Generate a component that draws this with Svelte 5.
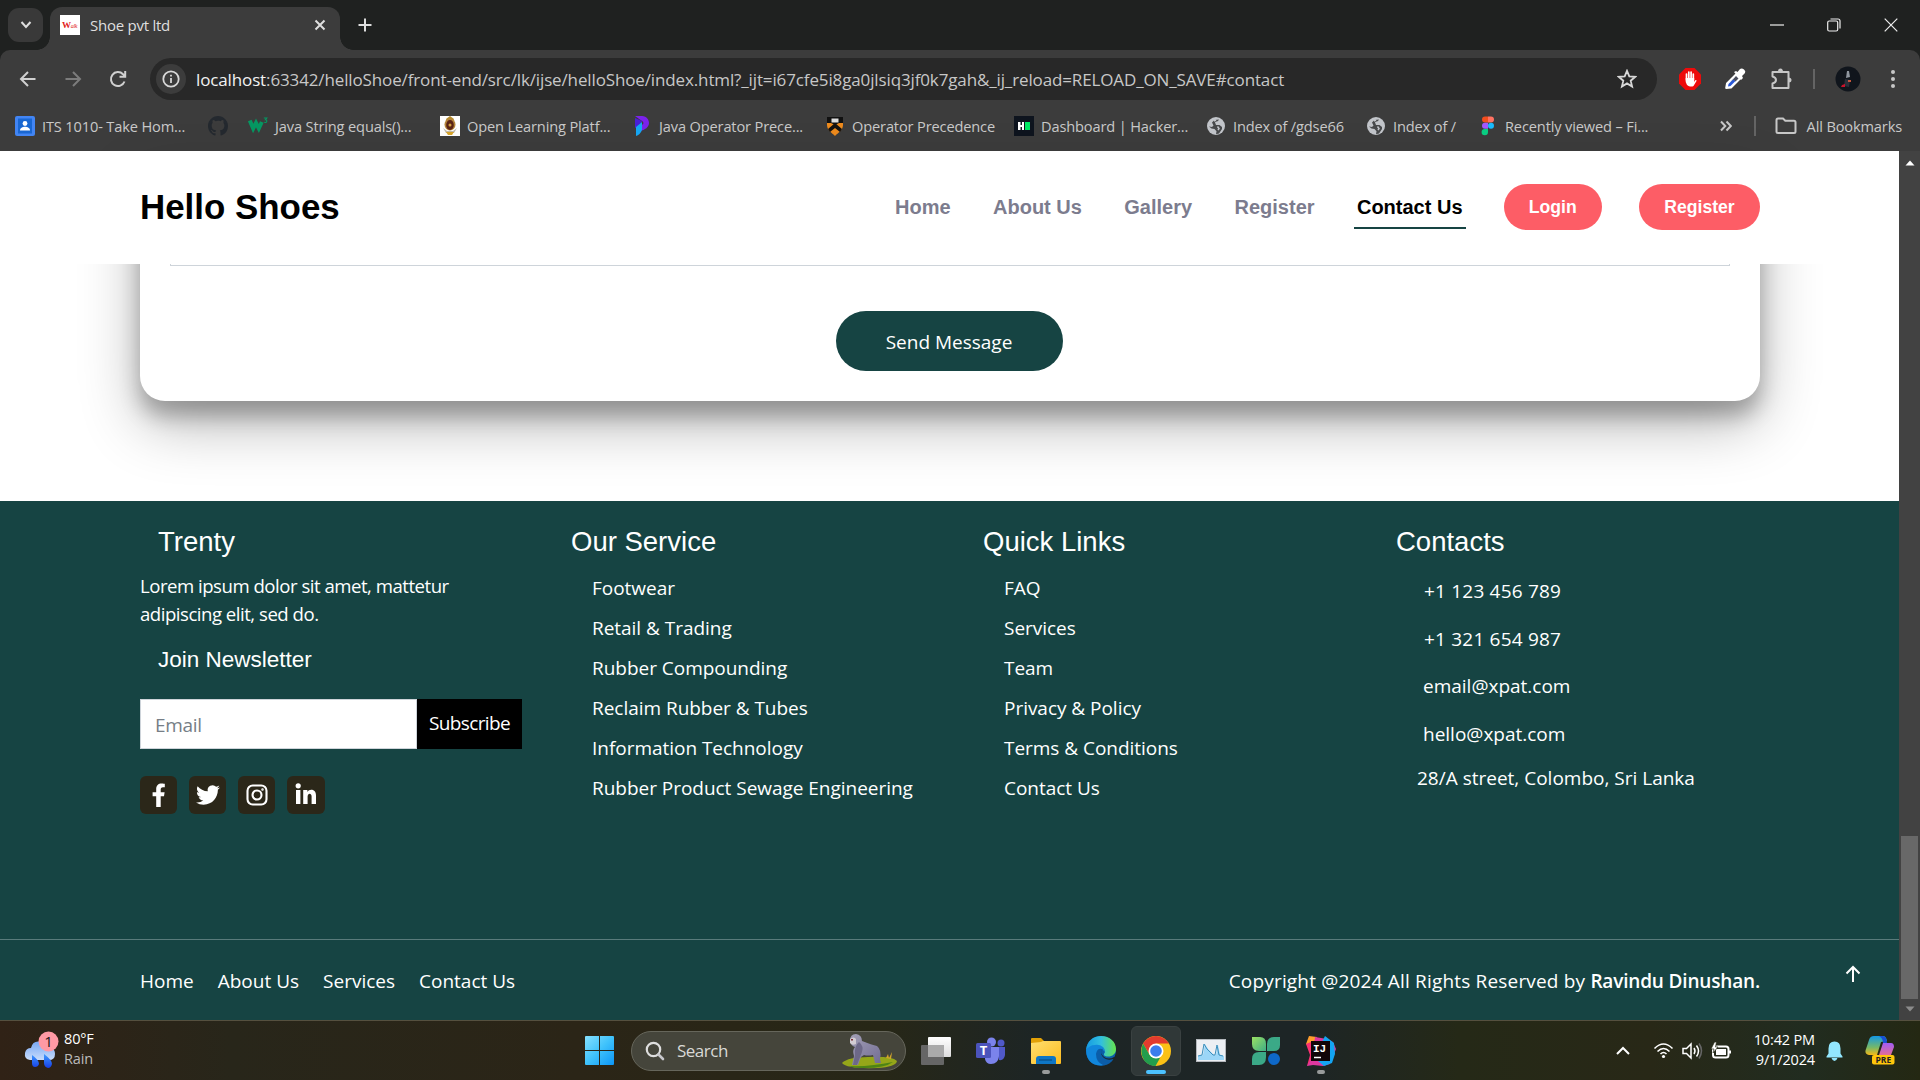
<script>
  const bookmarks = [
    { icon: 'contact', label: 'ITS 1010- Take Hom...' },
    { icon: 'github', label: '' },
    { icon: 'w3', label: 'Java String equals()...' },
    { icon: 'crest', label: 'Open Learning Platf...' },
    { icon: 'programiz', label: 'Java Operator Prece...' },
    { icon: 'princeton', label: 'Operator Precedence' },
    { icon: 'hacker', label: 'Dashboard | Hacker...' },
    { icon: 'globe', label: 'Index of /gdse66' },
    { icon: 'globe', label: 'Index of /' },
    { icon: 'figma', label: 'Recently viewed – Fi...' }
  ];
  const nav = ['Home', 'About Us', 'Gallery', 'Register', 'Contact Us'];
  const services = ['Footwear', 'Retail & Trading', 'Rubber Compounding', 'Reclaim Rubber & Tubes', 'Information Technology', 'Rubber Product Sewage Engineering'];
  const links = ['FAQ', 'Services', 'Team', 'Privacy & Policy', 'Terms & Conditions', 'Contact Us'];
</script>

{#snippet bookmarkIcon(name)}
  <svg class="bm-icon" viewBox="0 0 20 20" width="20" height="20">
    {#if name === 'contact'}
      <rect width="20" height="20" rx="2" fill="#4285f4" /><rect x="3" y="2.500" width="14" height="15" fill="#1967d2" />
      <circle cx="10" cy="7.500" r="2.400" fill="#fff" /><path d="M5 14.500c0-5 10-5 10 0z" fill="#fff" />
    {:else if name === 'github'}
      <path transform="scale(1.25)" fill="#24292f" d="M8 0C3.580 0 0 3.580 0 8c0 3.540 2.290 6.530 5.470 7.590.4.070.550-.170.550-.380v-1.490c-2.010.370-2.530-.490-2.690-.940-.090-.230-.480-.940-.820-1.130-.280-.150-.680-.520-.010-.530.630-.010 1.080.580 1.230.820.720 1.210 1.870.870 2.330.660.070-.520.280-.870.510-1.070-1.780-.2-3.640-.890-3.640-3.950 0-.870.310-1.590.820-2.150-.080-.2-.360-1.020.080-2.120 0 0 .670-.210 2.200.820A7.600 7.600 0 0 1 8 3.860c.680 0 1.360.090 2 .270 1.530-1.040 2.200-.820 2.200-.820.440 1.100.160 1.920.080 2.120.510.560.820 1.270.820 2.150 0 3.070-1.870 3.750-3.650 3.950.290.250.540.730.540 1.480v2.200c0 .210.150.460.550.380A8 8 0 0 0 16 8c0-4.420-3.580-8-8-8z" />
    {:else if name === 'w3'}
      <path d="M1.800 4.500l3.400 8 2.800-5.500 2.800 5.500 3-6.500" fill="none" stroke="#059862" stroke-width="4" stroke-linejoin="miter" stroke-miterlimit="3" />
      <path d="M15.800 2h3l-1.400 1.700c2 0 1.800 3-.2 2.800l-1-.3" fill="none" stroke="#059862" stroke-width="1.100" />
    {:else if name === 'crest'}
      <rect width="20" height="20" fill="#fff" /><path d="M6 3l4-3 4 3-1 3H7z" fill="#b58b2c" /><ellipse cx="10" cy="8.500" rx="5.500" ry="6" fill="#b5853a" />
      <ellipse cx="10" cy="9" rx="3.800" ry="5" fill="#5b2416" /><circle cx="10" cy="9" r="1.500" fill="#d3a240" /><path d="M3 12l4 3h6l4-3-3 5H6z" fill="#c4bcae" /><path d="M6 16h8l-2 3H8z" fill="#d8a62c" />
    {:else if name === 'programiz'}
      <path d="M3 0h7c5 0 7 4 7 7 0 4-4 7-9 8l1-6c3 0 3-3 1-4z" fill="#7c22ec" /><path d="M3 2l7 3-2 4-5 3z" fill="#4a20d5" /><path d="M10 6v8q-2 5-6 6v-9z" fill="#16a8f5" />
    {:else if name === 'princeton'}
      <path d="M2 2h16v7c0 5-5 8-8 11C7 17 2 14 2 9z" fill="#ee8b1d" /><path d="M2 1h16v6h-4l-4 2-4-2H2z" fill="#111" /><rect x="6.500" y="2.500" width="7" height="4" fill="#ddd" /><path d="M3 13l7-6 7 6-2 3-5-4-5 4z" fill="#15120f" />
    {:else if name === 'hacker'}
      <rect width="20" height="20" fill="#0e141e" /><path d="M4 6h2.500v3H8V6h2v8H8v-3H6.500v3H4z" fill="#fff" /><rect x="11" y="6" width="5" height="8" fill="#00ea64" />
    {:else if name === 'globe'}
      <circle cx="10" cy="10" r="9" fill="#c2c5ca" /><path d="M13 3.500c-1 2.500-3 1.500-4 3l1 2.500h3.500l2.500 2v2l-3 4.500-3 .8.500-3-2-2.300-3-.5L3 10.500l3 .5 1.500-1.500L6 6.500 8.500 4z" fill="#484a4c" /><path d="M11.500 10.500l1.500 2-1 1.500M8 5l2-1" stroke="#c2c5ca" stroke-width="1.500" fill="none" />
    {:else}
      <path d="M7 0.500h3v6H7a3 3 0 0 1 0-6z" fill="#f24e1e" /><path d="M10 .5h3a3 3 0 0 1 0 6h-3z" fill="#ff7262" /><path d="M10 6.700H7a3 3 0 0 0 0 6h3z" fill="#a259ff" />
      <circle cx="13" cy="9.700" r="3" fill="#1abcfe" /><path d="M10 12.900H7a3.200 3.200 0 1 0 3 3.200z" fill="#0acf83" />
    {/if}
  </svg>
{/snippet}

<div class="screen">
  <header class="tabstrip">
    <button class="tab-search" aria-label="Search tabs"><svg width="14" height="10" viewBox="0 0 14 10"><path d="M2.500 2l4.500 5 4.500-5" /></svg></button>
    <div class="tab">
      <span class="favicon"><b>W</b><i>alk</i></span>
      <span class="tab-title">Shoe pvt ltd</span>
      <svg width="14" height="14" viewBox="0 0 14 14"><path d="M2.500 2.500l9 9m0-9l-9 9" /></svg>
    </div>
    <svg class="plus" width="16" height="16" viewBox="0 0 16 16"><path d="M8 1.500v13M1.500 8h13" /></svg>
    <div class="window-controls">
      <svg width="14" height="14" viewBox="0 0 14 14"><path d="M0 7h14" /></svg>
      <svg width="14" height="14" viewBox="0 0 14 14"><rect x=".7" y="3" width="10" height="10" rx="1.500" /><path d="M3.500 1h7.500q2 0 2 2v7.500" /></svg>
      <svg width="14" height="14" viewBox="0 0 14 14"><path d="M.7.700l12.600 12.600m0-12.600L.7 13.300" /></svg>
    </div>
  </header>

  <section class="chrome">
    <div class="toolbar">
      <div class="nav-icons">
        <svg width="20" height="20" viewBox="0 0 20 20"><path d="M17.500 10H3m7-7l-7 7 7 7" /></svg>
        <svg class="dim" width="20" height="20" viewBox="0 0 20 20"><path d="M2.500 10H17m-7-7l7 7-7 7" /></svg>
        <svg width="20" height="20" viewBox="0 0 20 20"><path d="M16.500 12.500a7 7 0 1 1-1.500-7.300L17 7.500M17.200 2v5.700h-5.700" /></svg>
      </div>
      <div class="omnibox">
        <span class="info"><svg width="20" height="20" viewBox="0 0 20 20"><circle cx="10" cy="10" r="7.700" /><path d="M10 9v5M10 5.700v1.900" /></svg></span>
        <span class="url"><b>localhost</b>:63342/helloShoe/front-end/src/lk/ijse/helloShoe/index.html?_ijt=i67cfe5i8ga0jlsiq3jf0k7gah&_ij_reload=RELOAD_ON_SAVE#contact</span>
        <svg class="star" width="20" height="20" viewBox="0 0 20 20"><path d="M10 1.800l2.300 5.500 6 .5-4.600 3.900 1.400 5.900-5.100-3.200-5.100 3.200 1.400-5.900-4.600-3.900 6-.5z" /></svg>
      </div>
      <div class="extensions">
        <svg width="22" height="22" viewBox="0 0 22 22"><path d="M6.500 0h9L22 6.500v9L15.500 22h-9L0 15.500v-9z" fill="#ed0b0b" /><path d="M7.500 12V6m2.300 5V4m2.300 7V4m2.200 8V6" stroke="#fff" stroke-width="1.700" stroke-linecap="round" /><path d="M6.700 10h8.500v4l1.300-2q1.500 0 1 1l-3 5q-2 1-5 0-2-1-2.800-4z" fill="#fff" /></svg>
        <svg width="22" height="22" viewBox="0 0 22 22"><path d="M2.200 20l.8-4.500 9.500-9.500 4 4L7 19.500z" fill="#fff" stroke="#fff" stroke-width="2" stroke-linejoin="round" /><path d="M4 18.500l.5-2.500 5-5 2 2-5 5z" fill="#2857d8" /><path d="M6.500 14L12 8l2.500 2.500-3 3-2-2z" fill="#4b4f5e" /><path d="M10 4l2-1 1.500 1L16 1q2-1 4 .5T21 5l-3 3 1 2-2 2z" fill="#fff" /></svg>
        <svg class="outline" width="24" height="24" viewBox="0 0 24 24"><path d="M3.500 5h16v16h-16v-4.500q3.500-1 3.500-3.500t-3.500-3.500z" stroke-linejoin="round" /><path d="M9 5q0-3.500 2.500-3.500T14 5zM19.500 10.500q3 0 3 2.500t-3 2.500z" fill="#c7c7c7" stroke="none" /></svg>
        <span class="divider"></span>
        <svg class="avatar" width="26" height="26" viewBox="0 0 26 26"><circle cx="13" cy="13" r="12.500" fill="#10151c" /><path d="M12 5l2 0 1 6-4 1z" fill="#8f969f" /><path d="M10 13l5 1-1 7-5-1z" fill="#2b303b" /><path d="M13 14h3v2h-3z" fill="#c9573c" /><path d="M7 19l3-1v3H6z" fill="#c8122b" /></svg>
        <svg class="dots" width="6" height="20" viewBox="0 0 6 20"><g fill="#c7c7c7"><circle cx="3" cy="3" r="2" /><circle cx="3" cy="10" r="2" /><circle cx="3" cy="17" r="2" /></g></svg>
      </div>
    </div>
    <div class="bookmarks">
      <div class="bookmark-grid">
        {#each bookmarks as bookmark}
          <span class="bookmark">{@render bookmarkIcon(bookmark.icon)}{bookmark.label}</span>
        {/each}
      </div>
      <div class="all-bookmarks">
        <svg class="more" width="12" height="12" viewBox="0 0 12 12"><path d="M1 1.500L5.300 6 1 10.500M6.500 1.500L10.800 6l-4.300 4.500" /></svg>
        <span class="divider"></span>
        <svg class="folder" width="22" height="18" viewBox="0 0 22 18"><path d="M1.500 3q0-1.500 1.500-1.500h5l2.300 2.300H19q1.500 0 1.500 1.500V14.500q0 1.500-1.500 1.500H3q-1.500 0-1.500-1.500z" /></svg>
        <span>All Bookmarks</span>
      </div>
    </div>
  </section>

  <div class="viewport">
    <main class="page">
      <nav class="site-nav">
        <h1>Hello Shoes</h1>
        <div class="nav-links">
          {#each nav as item, i}<a class:active={i === 4} href="#{item}">{item}</a>{/each}
        </div>
        <div class="nav-buttons"><button>Login</button><button>Register</button></div>
      </nav>
      <section class="contact">
        <div class="card">
          <div class="message-box"></div>
          <button class="send">Send Message</button>
        </div>
      </section>
      <footer>
        <div class="columns">
          <div class="about">
            <h2>Trenty</h2>
            <p>Lorem ipsum dolor sit amet, mattetur<br />adipiscing elit, sed do.</p>
            <h3>Join Newsletter</h3>
            <div class="newsletter"><span class="email">Email</span><button>Subscribe</button></div>
            <div class="social">
              <span><svg width="24" height="24" viewBox="0 0 24 24"><path fill="#fff" d="M9.200 24V13.300H5.600V9.200h3.600V6.100C9.200 2.500 11.300.5 14.600.5c1.600 0 3.200.3 3.200.3v3.500H16c-1.800 0-2.300 1.100-2.300 2.200v2.700h3.900l-.6 4.100h-3.300V24z" /></svg></span>
              <span><svg width="24" height="24" viewBox="0 0 24 24"><path fill="#fff" d="M23.950 4.570a10 10 0 0 1-2.820.770 4.960 4.960 0 0 0 2.160-2.720c-.950.550-2 .950-3.130 1.180a4.920 4.920 0 0 0-8.380 4.480C7.690 8.100 4.070 6.130 1.640 3.160a4.820 4.820 0 0 0-.660 2.480c0 1.710.870 3.210 2.190 4.100a4.900 4.900 0 0 1-2.230-.620v.060a4.920 4.920 0 0 0 3.950 4.830 5 5 0 0 1-2.210.080 4.940 4.940 0 0 0 4.600 3.420A9.870 9.870 0 0 1 0 19.540a13.990 13.990 0 0 0 7.550 2.210c9.140 0 14.310-7.720 14.310-14.420l-.020-.640a9.940 9.940 0 0 0 2.110-2.120z" /></svg></span>
              <span><svg width="24" height="24" viewBox="0 0 24 24" fill="none" stroke="#fff" stroke-width="2.100"><rect x="2.500" y="2.500" width="19" height="19" rx="5.200" /><circle cx="12" cy="12" r="4.500" /><circle cx="17.500" cy="6.500" r=".5" stroke-width="1.500" /></svg></span>
              <span><svg width="24" height="24" viewBox="0 0 24 24" fill="#fff"><circle cx="4.200" cy="2.800" r="2.600" /><path d="M2 7h4.400v14H2zM9.200 7h4.200v1.900c1.700-3.200 8.600-3.200 8.600 3.600V21h-4.400v-7.500c0-4-4-3.600-4 0V21H9.200z" /></svg></span>
            </div>
          </div>
          <div class="links-col"><h2>Our Service</h2><ul>{#each services as item}<li>{item}</li>{/each}</ul></div>
          <div class="links-col"><h2>Quick Links</h2><ul>{#each links as item}<li>{item}</li>{/each}</ul></div>
          <div class="contacts"><h2>Contacts</h2><p class="phone">+1 123 456 789</p><p class="phone">+1 321 654 987</p><p>email@xpat.com</p><p>hello@xpat.com</p><p class="address">28/A street, Colombo, Sri Lanka</p></div>
        </div>
        <div class="bottom">
          <div class="bottom-links"><span>Home</span><span>About Us</span><span>Services</span><span>Contact Us</span></div>
          <p class="copyright">Copyright @2024 All Rights Reserved by <b>Ravindu Dinushan.</b></p>
          <svg class="to-top" width="16" height="18" viewBox="0 0 16 18"><path d="M8 17V2M1.500 8.500L8 2l6.500 6.500" /></svg>
        </div>
      </footer>
    </main>
    <aside class="scrollbar">
      <svg width="10" height="8" viewBox="0 0 10 8"><path d="M5 1.500L9.500 6.500h-9z" fill="#fff" /></svg>
      <span class="thumb"></span>
      <svg width="10" height="8" viewBox="0 0 10 8"><path d="M5 6.500L9.500 1.500h-9z" fill="#8c8c8c" /></svg>
    </aside>
  </div>

  <div class="taskbar">
    <div class="weather">
      <svg width="36" height="40" viewBox="0 0 36 40">
        <defs><linearGradient id="cloud" x2="0" y2="1"><stop stop-color="#78a8f5" /><stop offset="1" stop-color="#c8dcfb" /></linearGradient><linearGradient id="drop" x2="0" y2="1"><stop stop-color="#3f9cff" /><stop offset="1" stop-color="#173fe8" /></linearGradient></defs>
        <path d="M6 29q-6-1-5-7 1-5 6-5Q9 9 17 11q10-2 10 6 4 1 4 6 0 6-6 6z" fill="url(#cloud)" />
        <path d="M8 24q7 5 7 9-1 3-4 3-3 0-3-4zM20 23q8 6 8 10-1 4-4 4-4-1-4-5z" fill="url(#drop)" />
        <circle cx="24.500" cy="10.500" r="10" fill="#ff99a4" /><text x="24.500" y="16" text-anchor="middle" font-size="15" fill="#201516">1</text>
      </svg>
      <div class="weather-text"><span>80°F</span><span class="muted">Rain</span></div>
    </div>

    <div class="apps">
      <svg width="29" height="29" viewBox="0 0 29 29"><defs><linearGradient id="win" x2="1" y2="1"><stop stop-color="#86e1ff" /><stop offset=".5" stop-color="#3fc2fb" /><stop offset="1" stop-color="#0c96f8" /></linearGradient></defs><path fill="url(#win)" d="M1 0h13v14H0V1q0-1 1-1zM15 0h13q1 0 1 1v13H15zM0 15h14v14H1q-1 0-1-1zM15 15h14v13q0 1-1 1H15z" /></svg>
      <div class="search">
        <svg width="20" height="20" viewBox="0 0 20 20"><circle cx="8.500" cy="8.500" r="6.700" fill="none" stroke="#dedede" stroke-width="2.200" /><path d="M13.500 13.500l4.500 4.500" stroke="#c8c8cc" stroke-width="2.600" stroke-linecap="round" /></svg>
        <span>Search</span>
        <svg class="gorilla" width="57" height="36" viewBox="0 0 57 36">
          <defs><linearGradient id="fur" x2="1" y2="1"><stop stop-color="#a39fb6" /><stop offset="1" stop-color="#716c93" /></linearGradient></defs>
          <path d="M1 30q6-6 26-6 24-1 29 4-1 6-20 7-30 1-35-5z" fill="#95a619" /><path d="M8 33q20 1 44-4-8 6-28 6-12 0-16-2z" fill="#4e8415" /><path d="M45 25l2-4 1 4 3-6-1 7" fill="#d4a62a" />
          <path d="M9 8q0-7 6-7 6 1 6 7 10 4 15 5 5 4 3 13l1 4h-6l-2-8q-5 1-9 0l-3 2-3 8h-6l2-9q-2-6 1-9-4-1-5-6z" fill="url(#fur)" /><path d="M18 9q5 4 3 10l-5 13h-4l2-10q-1-9 4-13z" fill="#6d6888" /><path d="M9 6q4-3 6 0v5q-4 2-6-1z" fill="#d3ccd3" /><path d="M10 6h2v1.500h-2z" fill="#7a3038" />
        </svg>
      </div>
      <svg width="30" height="28" viewBox="0 0 30 28"><defs><linearGradient id="view" x2="0" y2="1"><stop stop-color="#fff" /><stop offset="1" stop-color="#ddd" /></linearGradient></defs><rect y="8" width="23" height="20" rx="1" fill="#666" /><rect x="7" width="23" height="20" rx="1" fill="url(#view)" /><rect x="7" y="8" width="16" height="12" fill="#aaa" /></svg>
      <svg width="30" height="28" viewBox="0 0 30 28"><circle cx="15.500" cy="5" r="4.500" fill="#7b83eb" /><circle cx="25" cy="6" r="3.500" fill="#5059c9" /><path d="M20 10h9v8q-1 6-6 5z" fill="#5059c9" /><path d="M9 10h14v9q-1 8-8 8-5 0-6-5z" fill="#7b83eb" /><rect y="6" width="15" height="15" rx="1.500" fill="#4b53bc" /><text x="7.500" y="18" text-anchor="middle" fill="#fff" font-size="13" font-weight="700">T</text></svg>
      <svg width="30" height="28" viewBox="0 0 30 28"><defs><linearGradient id="fold" x2="1" y2="1"><stop stop-color="#ffdf70" /><stop offset="1" stop-color="#fdbc1f" /></linearGradient></defs><path d="M0 2q0-1 1-1h9l3 3-3 6H0z" fill="#e2a107" /><path d="M10 5l2-1h17q1 0 1 1v21q0 1-1 1H1q-1 0-1-1V6z" fill="url(#fold)" /><path d="M5 27v-5q0-3 3-3h14q3 0 3 3v5z" fill="#0e76c5" /><path d="M8 23h13" stroke="#074579" /></svg>
      <svg width="30" height="30" viewBox="0 0 30 30"><defs><linearGradient id="edge" x1="0" x2="1"><stop stop-color="#159ae3" /><stop offset=".5" stop-color="#32bfdf" /><stop offset="1" stop-color="#66e44c" /></linearGradient></defs><circle cx="15" cy="15" r="15" fill="#0b5da8" /><path d="M0 14q3-7 11-6 8 1 8 8l-3-3q-5-1-6 5 0 8 7 11Q1 31 0 14z" fill="#1187dc" /><path d="M0 14C1 5 7 0 15 0c9 0 15 6 15 13 0 6-6 9-11 7-2-1-1-2 0-4 0-5-5-8-10-7-4 0-7 2-9 5z" fill="url(#edge)" /><path d="M17 12q-4 5 1 9 5 3 10 0 2-1 1-1l1-3v3l-3 5 0 0q1-2 0-2-5 2-9-1-5-4-1-10z" fill="#1c2426" /></svg>
      <span class="app-active"><svg width="30" height="30" viewBox="0 0 30 30"><circle cx="15" cy="15" r="15" fill="#fbc116" /><path d="M2 7.500Q7 0 15 0t13 7.500H15l-6.500 11z" fill="#e33b2e" /><path d="M2 7.500l6.500 11.200Q11 22 15 22h4l-4.500 8Q8 30 3.500 25-2 17 2 7.500z" fill="#229d4d" /><circle cx="15" cy="15" r="7.500" fill="#fff" /><circle cx="15" cy="15" r="5.800" fill="#3b7ded" /></svg></span>
      <svg width="30" height="23" viewBox="0 0 30 23"><rect x=".5" y=".5" width="29" height="22" fill="#eceff3" stroke="#b4b8bd" /><path d="M2 17l5-1 2-11 3 5 3 3 3 3h2l2-10 2 10 4 1v4H2z" fill="#9bd6f7" /><path d="M2 17l4-1 2-11 3 5 3 3 3 3h2l2-10 2 10 4 1" stroke="#3a8ebc" fill="none" /></svg>
      <svg class="leaf" width="28" height="28" viewBox="0 0 28 28"><defs><linearGradient id="leaf" x2="1" y2="1"><stop stop-color="#9ae063" /><stop offset="1" stop-color="#3fae85" /></linearGradient></defs><path d="M0 0h8q6 0 6 7v7H7q-7 0-7-7z" fill="url(#leaf)" /><path d="M15 14V7q0-7 7-7h6v8q0 6-6 6zM0 28v-6q0-7 7-7h7v5q0 8-7 8z" fill="#3ba987" /><circle cx="22" cy="22" r="6" fill="#0e68c8" /></svg>
      <svg width="30" height="30" viewBox="0 0 30 30"><path d="M3 0l8 1-5 12-6-5z" fill="#ff9d2e" /><path d="M0 8l10-4v20L1 30l3-11z" fill="#fb2f72" /><path d="M9 1l12 2 6 3 3 7-6 15-7 2-10-1-6 1 6-10z" fill="#dd38a0" /><path d="M16 6l3-6 9 7 1 11-3 9-8 3-6-5z" fill="#13a5f3" /><rect x="5" y="5" width="19" height="20" fill="#120508" /><text x="7" y="15.500" fill="#fff" font-size="11" font-weight="700" class="mono">IJ</text><path d="M8 21.500h7" stroke="#fff" stroke-width="1.500" /></svg>
      <i class="mark folder-mark"></i><i class="mark chrome-mark"></i><i class="mark ij-mark"></i>
    </div>

    <div class="tray">
      <svg width="16" height="10" viewBox="0 0 16 10"><path d="M2 8l6-6 6 6" /></svg>
      <svg width="21" height="17" viewBox="0 0 21 17"><path d="M1.500 6.500q9-9 18 0M4.500 9.500q6-6 12 0M7.500 12q3-3 6 0" stroke-width="1.600" /><circle cx="10.500" cy="14.500" r="1.600" fill="#fff" stroke="none" /></svg>
      <svg width="21" height="18" viewBox="0 0 21 18"><path d="M1 6.500h3.500L9 2v14l-4.500-4.500H1zM12 6q2 3 0 6M14.500 3.500q4 5.500 0 11" stroke-width="1.500" /><path d="M17 1.500q5 7 0 15" stroke="#666" stroke-width="1.500" /></svg>
      <svg width="21" height="18" viewBox="0 0 21 18"><rect x="2" y="4.500" width="15.500" height="11" rx="2.500" /><rect x="5" y="7" width="10" height="6" fill="#fff" stroke="none" /><path d="M18 8.500h2v3h-2z" fill="#fff" stroke="none" /><path d="M3.500 0L0 7h3l-1 4 5-6H4.500L5.500 0z" fill="#fff" stroke="#242814" stroke-width=".7" /></svg>
      <div class="clock"><span>10:42 PM</span><span>9/1/2024</span></div>
      <svg width="17" height="20" viewBox="0 0 17 20"><path d="M8.500.5q6 0 6 7v5l2 3v1H.5v-1l2-3v-5q0-7 6-7zM5.500 17h6q-1 3-3 3t-3-3z" fill="#93e7ff" stroke="none" /></svg>
      <svg width="30" height="29" viewBox="0 0 30 29"><defs><linearGradient id="cpa" x2="0" y2="1"><stop stop-color="#1399e5" /><stop offset=".6" stop-color="#76b868" /><stop offset="1" stop-color="#f4b817" /></linearGradient><linearGradient id="cpb" x2="0" y2="1"><stop stop-color="#a15cf6" /><stop offset="1" stop-color="#f2727f" /></linearGradient></defs><path d="M9 0h9q3 0 4 5l-6 1-4 13H4q-5-1-3-6L4 4q1-4 5-4z" fill="url(#cpa)" stroke="none" /><path d="M18 7h8q3 0 3 4l-3 8q-1 3-5 3h-8z" fill="url(#cpb)" stroke="none" /><path d="M14 0h4q4 1 4 7h-4q0-5-4-7z" fill="#184fd3" stroke="none" /><rect x="7" y="19" width="22.500" height="9.500" rx="2" fill="#ffc60b" stroke="none" /><text x="18.300" y="26.800" text-anchor="middle" font-size="8.500" font-weight="700" fill="#222" stroke="none">PRE</text></svg>
    </div>
  </div>
</div>

<style>
  :global(body) { margin: 0; overflow: hidden; background: #1f2120; }
  * { box-sizing: border-box; }
  h1, h2, h3, p, ul { margin: 0; padding: 0; }
  button { border: 0; padding: 0; font: inherit; color: inherit; }
  svg { display: block; flex: none; }
  .screen { width: 1920px; height: 1080px; display: flex; flex-direction: column; overflow: hidden; font-family: "Open Sans", "Noto Sans", sans-serif; letter-spacing: 0; white-space: nowrap; }

  .tabstrip { height: 50px; flex: none; display: flex; align-items: center; padding-left: 8px; background: #1f2120; }
  .tabstrip svg { fill: none; stroke: #dedede; stroke-width: 2; }
  .tab-search { width: 35px; height: 34px; border-radius: 11px; background: #393939; display: grid; place-items: center; margin-right: 7px; }
  .tab { position: relative; width: 290px; height: 43px; align-self: flex-end; background: #3c3c3c; border-radius: 12px 12px 0 0; display: flex; align-items: center; padding: 0 13px 7px 10px; color: #dfdfdf; font-size: 15px; letter-spacing: -.25px; }
  .tab::before, .tab::after { content: ""; position: absolute; bottom: 0; width: 13px; height: 13px; }
  .tab::before { left: -13px; background: radial-gradient(circle at 0 0, transparent 12.5px, #3c3c3c 13px); }
  .tab::after { right: -13px; background: radial-gradient(circle at 100% 0, transparent 12.5px, #3c3c3c 13px); }
  .favicon { width: 20px; height: 20px; background: #fff; margin-right: 10px; color: #e21b1b; font: 6px/20px "Liberation Serif", serif; padding-left: 2px; letter-spacing: -.3px; }
  .favicon b { font-size: 9px; }
  .tab-title { flex: 1; }
  .plus { margin-left: 17px; }
  .window-controls { margin-left: auto; display: flex; gap: 43px; padding-right: 22px; }
  .window-controls svg { stroke: #eee; stroke-width: 1.2; }

  .chrome { height: 101px; flex: none; background: #3c3c3c; border-radius: 10px 10px 0 0; }
  .toolbar { height: 58px; padding: 8px 0; display: flex; align-items: center; }
  .nav-icons { width: 150px; display: flex; gap: 25px; padding-left: 18px; }
  .nav-icons svg { fill: none; stroke: #d0d0d0; stroke-width: 2; }
  .nav-icons .dim { stroke: #7c7c7c; }
  .omnibox { width: 1507px; height: 42px; border-radius: 21px; background: #282828; display: flex; align-items: center; padding: 0 20px 0 6px; }
  .info { width: 30px; height: 30px; border-radius: 50%; background: #3c3c3c; display: grid; place-items: center; margin-right: 10px; }
  .info svg, .star { fill: none; stroke: #d8d8d8; stroke-width: 1.8; }
  .url { flex: 1; font-size: 17px; color: #c7c7c7; letter-spacing: -.13px; }
  .url b { font-weight: 400; color: #f2f2f2; }
  .extensions { display: flex; align-items: center; padding-left: 22px; flex: 1; gap: 23px; }
  .extensions .divider { margin-left: -3px; }
  .avatar { margin: 0 6px 0 -3px; }
  .outline, .folder, .more { fill: none; stroke: #c7c7c7; stroke-width: 2; }
  .divider { width: 2px; height: 20px; background: #646464; }
  .bookmarks { height: 43px; padding: 0 18px 8px 15px; display: flex; align-items: center; justify-content: space-between; font-size: 14.6px; letter-spacing: -.14px; color: #c9c9c9; }
  .bookmark-grid { display: grid; grid-template-columns: 193px 40px 192px 192px 193px 189px 192px 160px 112px 180px; }
  .bookmark { display: flex; align-items: center; gap: 7px; }
  .all-bookmarks { display: flex; align-items: center; }
  .more { margin-right: 22px; }
  .all-bookmarks .divider { margin-right: 19px; }
  .folder { margin-right: 10px; }

  .viewport { height: 869px; flex: none; display: flex; }
  .page { width: 1899px; background: #fff; display: flex; flex-direction: column; }
  .site-nav { position: relative; z-index: 1; height: 113px; flex: none; background: #fff; display: flex; align-items: center; padding: 0 139px 2px 140px; font-family: "Liberation Sans", sans-serif; font-weight: 700; }
  h1 { font-size: 34.9px; line-height: 40px; }
  .nav-links { margin-left: auto; display: flex; gap: 36.4px; font-size: 20px; }
  .nav-links a { color: #7c7c8e; text-decoration: none; padding: 12px 3px 8px; border-bottom: 2px solid transparent; line-height: 23px; }
  .nav-links .active { color: #000; border-color: #164443; }
  .nav-buttons { display: flex; gap: 37px; margin-left: 38px; }
  .nav-buttons button { height: 46px; padding: 1px 25.3px 0; border-radius: 23px; background: #fd5d66; color: #fff; font-size: 17.6px; }
  .contact { height: 237px; flex: none; padding: 0 139px 100px 140px; }
  .card { height: 237px; margin-top: -100px; background: #fff; border-radius: 0 0 25px 25px; padding: 100px 30px 0; display: flex; flex-direction: column; align-items: center; box-shadow: 0 22px 60px rgba(0,0,0,.3), 0 15px 20px rgba(0,0,0,.25); }
  .message-box { width: 1560px; height: 2px; border: 1px solid #ced4da; border-top: 0; }
  .send { margin: 45px 2px 0 0; width: 227px; height: 60px; padding-top: 1px; border-radius: 30px; background: #164443; color: #fff; font-size: 19px; }

  footer { position: relative; flex: 1; background: #164443; color: #fff; font-size: 19px; display: flex; flex-direction: column; }
  .columns { height: 438px; display: grid; grid-template-columns: 431px 412px 413px 400px; padding: 24px 0 0 140px; }
  h2, h3 { font-family: "Liberation Sans", sans-serif; font-weight: 400; }
  h2 { font-size: 27.5px; line-height: 33px; }
  .about h2, .about h3 { padding-left: 18px; }
  .about p { font-size: 18.6px; letter-spacing: -.49px; line-height: 28px; margin-top: 14px; }
  h3 { font-size: 22.5px; line-height: 27px; margin-top: 18px; }
  .newsletter { margin-top: 26px; height: 50px; width: 382px; display: flex; }
  .email { flex: 1; background: #fff; border: 1px solid #ced4da; color: #767e86; line-height: 50px; padding-left: 14px; letter-spacing: -.3px; }
  .newsletter button { width: 105px; background: #000; color: #fff; letter-spacing: -.65px; padding-bottom: 2px; }
  .social { display: flex; gap: 12px; margin-top: 27px; }
  .social span { width: 37px; height: 38px; border-radius: 6px; background: #2b2719; display: grid; place-items: center; }
  .social span:last-child { width: 38px; }
  .links-col ul { list-style: none; padding: 10px 0 0 21px; }
  .links-col li { height: 40px; line-height: 40px; letter-spacing: -.03px; }
  .contacts p { padding-left: 27px; height: 47.500px; line-height: 48.500px; }
  .contacts .phone { padding-left: 28px; letter-spacing: .2px; }
  .contacts h2 { margin-bottom: 9px; }
  .contacts .address { padding-left: 21px; line-height: 43px; }
  .bottom { position: relative; border-top: 1px solid #597b7b; flex: 1; display: flex; align-items: center; justify-content: space-between; padding: 1px 139px 0 140px; }
  .bottom-links { display: flex; gap: 24px; }
  .copyright { letter-spacing: .18px; }
  .bottom b { font-weight: 600; letter-spacing: -.17px; }
  .to-top { position: absolute; left: 1845px; top: 25px; fill: none; stroke: #fff; stroke-width: 2; }
  .scrollbar { width: 21px; background: #424242; display: flex; flex-direction: column; align-items: center; padding: 8px 0 7px; }
  .thumb { width: 17px; height: 163px; background: #686868; margin: auto 0 6px; }

  .taskbar { height: 60px; flex: none; display: grid; grid-template-columns: 585px 1fr 350px; align-items: center; border-top: 1px solid #55503f; background: linear-gradient(90deg, #302216, #28261a 12%, #2b2517 30%, #272717 46%, #1d2525 54%, #1d2526 68%, #252917 76%, #282817 86%, #212c20 94%, #242813); color: #fff; }
  .weather { display: flex; padding-left: 24px; gap: 4px; }
  .weather-text, .clock { display: flex; flex-direction: column; font-size: 14.500px; line-height: 20px; letter-spacing: -.15px; margin-top: -2px; }
  .muted { color: #bbb; }
  .apps { position: relative; height: 59px; display: flex; align-items: center; gap: 25px; }
  .search { width: 275px; height: 40px; border: 1px solid #66665b; border-radius: 20px; background: #45453b; display: flex; align-items: center; margin: 0 -10px 0 -8px; padding: 0 7px 0 13px; font-size: 17px; color: #d9d9d6; }
  .search span { margin-left: 12px; letter-spacing: -.5px; }
  .gorilla { margin-left: auto; }
  .app-active { width: 50px; height: 50px; margin: 0 -10px; border-radius: 6px; background: #303838; border: 1px solid #3a4141; display: grid; place-items: center; }
  .leaf { margin: 0 1px; }
  .mark { position: absolute; top: 49px; width: 8px; height: 4px; border-radius: 2px; background: #989b9b; }
  .folder-mark { left: 457px; }
  .chrome-mark { left: 561px; width: 20px; background: #4cc2ff; }
  .ij-mark { left: 732px; }
  .mono { font-family: "Liberation Mono", monospace; }
  .tray { display: flex; align-items: center; padding-left: 45px; }
  .tray svg { fill: none; stroke: #fff; stroke-width: 2; margin-right: 8px; }
  .tray svg:first-child { margin-right: 22px; }
  .tray .clock { width: 74px; align-items: flex-end; margin-right: 11px; }
  .tray .clock + svg { margin-right: 22px; }
  .tray svg:nth-child(4) { margin-right: 9px; }
  .tray svg:last-child { margin: 0; }
</style>
